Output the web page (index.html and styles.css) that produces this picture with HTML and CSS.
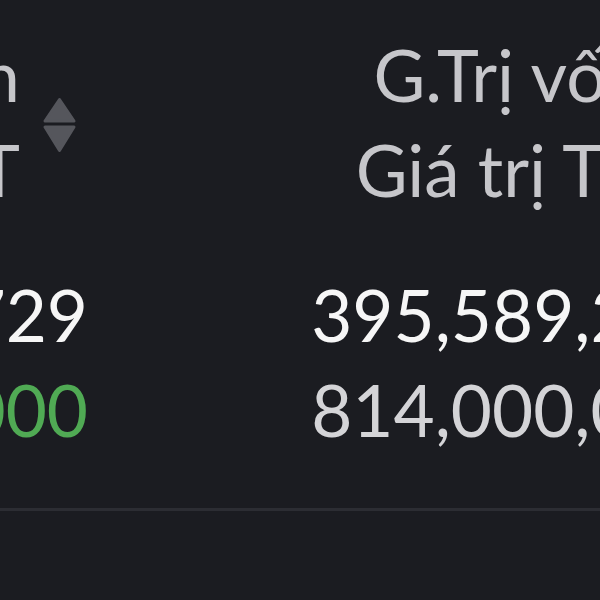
FILE: index.html
```html
<!DOCTYPE html>
<html lang="vi">
<head>
<meta charset="utf-8">
<link rel="stylesheet" href="styles.css">
</head>
<body>
<div class="table">
  <div class="head">
    <div class="cell cell-a">
      <div class="head-text">
        <span>Giá vốn</span>
        <span>Giá TT</span>
      </div>
      <svg class="sort" width="35" height="56" viewBox="0 0 35 56">
        <path d="M3 24 L17.5 2.5 L32 24 Z" />
        <path d="M3 30 L17.5 53.5 L32 30 Z" />
      </svg>
    </div>
    <div class="cell cell-b">
      <div class="head-text">
        <span>G.Trị vốn</span>
        <span>Giá trị TT</span>
      </div>
      <svg class="sort" width="35" height="56" viewBox="0 0 35 56">
        <path d="M3 24 L17.5 2.5 L32 24 Z" />
        <path d="M3 30 L17.5 53.5 L32 30 Z" />
      </svg>
    </div>
  </div>
  <div class="body">
    <div class="cell num"><span>26,729</span></div>
    <div class="cell num"><span>395,589,200</span></div>
    <div class="cell num up"><span>54,000</span></div>
    <div class="cell num muted"><span>814,000,000</span></div>
  </div>
</div>
</body>
</html>
```
FILE: styles.css
```css
html, body {
  margin: 0;
  padding: 0;
  background: #1b1c21;
  overflow: hidden;
}
body {
  width: 600px;
  height: 600px;
  font-family: Lato, "Open Sans", sans-serif;
  font-size: 71px;
  line-height: 95px;
}
.table {
  width: 714px;
  border-bottom: 3px solid #2c2d33;
  padding-bottom: 51px;
}
.head, .body {
  display: grid;
  grid-template-columns: 88px 626px;
}
.head {
  padding-top: 27px;
  color: #c6c6ca;
}
.body {
  margin-top: 50px;
  color: #f6f6f6;
}
.cell {
  display: flex;
  justify-content: flex-end;
  align-items: center;
  white-space: nowrap;
  min-width: 0;
}
.cell > * {
  flex-shrink: 0;
}
.head .cell {
  gap: 22px;
  padding-right: 11px;
}
.head-text {
  display: flex;
  flex-direction: column;
  align-items: flex-end;
}
.sort {
  margin-top: 6px;
}
.sort path {
  fill: #55565c;
  stroke: #55565c;
  stroke-width: 3;
  stroke-linejoin: round;
}
.up {
  color: #50aa54;
}
.muted {
  color: #d4d4d7;
}
```
